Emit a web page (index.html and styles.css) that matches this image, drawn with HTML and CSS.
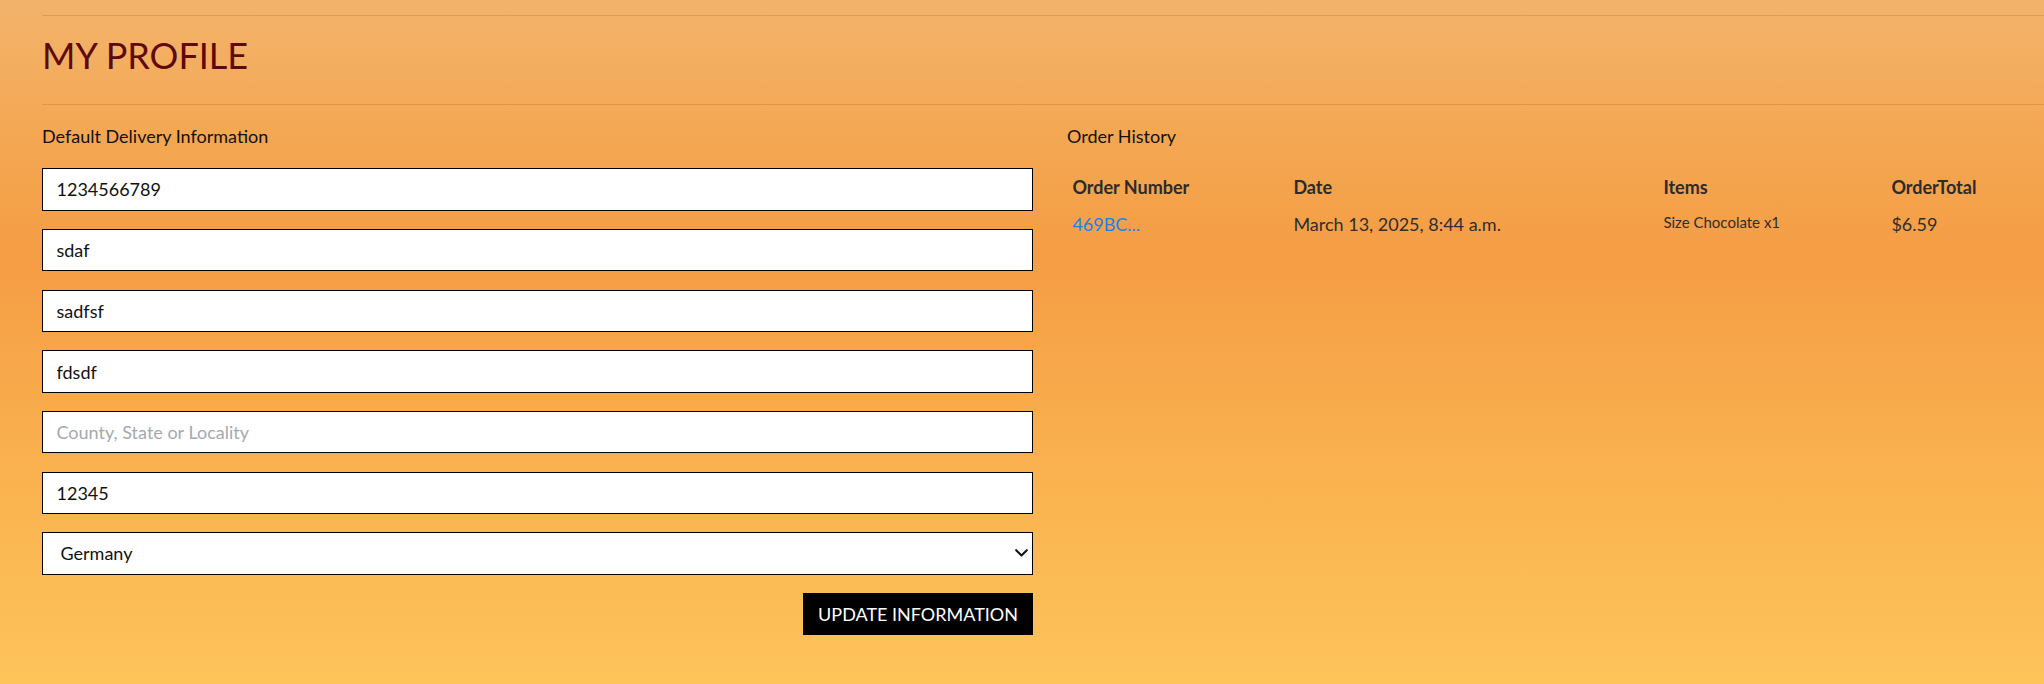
FILE: index.html
```html
<!DOCTYPE html>
<html lang="en">
<head>
<meta charset="utf-8">
<title>My Profile</title>
<link rel="stylesheet" href="styles.css">
</head>
<body>
<main class="profile">
  <hr class="rule">
  <h1 class="title">MY PROFILE</h1>
  <hr class="rule">
  <div class="columns">
    <section class="delivery">
      <p class="section-label">Default Delivery Information</p>
      <form class="delivery-form">
        <input class="field" type="text" value="1234566789">
        <input class="field" type="text" value="sdaf">
        <input class="field" type="text" value="sadfsf">
        <input class="field" type="text" value="fdsdf">
        <input class="field" type="text" placeholder="County, State or Locality">
        <input class="field" type="text" value="12345">
        <div class="select-wrap">
          <select class="field field-select">
            <option>Germany</option>
          </select>
          <svg class="select-arrow" width="13" height="8" viewBox="0 0 13 8" aria-hidden="true">
            <path d="M1.2 1.2 L6.5 6.4 L11.8 1.2" fill="none" stroke="#111" stroke-width="2.1" stroke-linecap="round" stroke-linejoin="round"/>
          </svg>
        </div>
        <div class="actions">
          <button class="btn-update" type="button">UPDATE INFORMATION</button>
        </div>
      </form>
    </section>
    <section class="history">
      <p class="section-label">Order History</p>
      <table class="orders">
        <colgroup>
          <col class="col-number">
          <col class="col-date">
          <col class="col-items">
          <col class="col-total">
        </colgroup>
        <thead>
          <tr>
            <th>Order Number</th>
            <th>Date</th>
            <th>Items</th>
            <th>OrderTotal</th>
          </tr>
        </thead>
        <tbody>
          <tr>
            <td><a class="order-link" href="#">469BC...</a></td>
            <td>March 13, 2025, 8:44 a.m.</td>
            <td class="items-cell">Size Chocolate x1</td>
            <td>$6.59</td>
          </tr>
        </tbody>
      </table>
    </section>
  </div>
</main>
</body>
</html>
```
FILE: styles.css
```css
html {
  min-height: 100%;
  background: linear-gradient(180deg, #f3b36b 0%, #f4a650 22%, #f59d45 38%, #f9ad4c 62%, #fdc45a 100%);
}

body {
  margin: 0;
  min-height: 684px;
  overflow-x: hidden;
  font-family: "Lato", "Open Sans", sans-serif;
  font-size: 18px;
  line-height: 27px;
  color: #111;
}

.profile {
  padding: 15px 0 0 42px;
}

.rule {
  margin: 0;
  height: 0;
  border: 0;
  border-top: 1px solid rgba(120, 60, 0, 0.18);
}

.title {
  margin: 18px 0 27px;
  font-size: 36px;
  line-height: 1.2;
  font-weight: 400;
  color: #5e0a0a;
}

.columns {
  display: grid;
  grid-template-columns: 991px 1fr;
  column-gap: 34px;
  margin-top: 18px;
}

.section-label {
  margin: 0 0 18px;
  font-size: 18px;
  line-height: 27px;
  color: #111;
}

.delivery-form {
  display: flex;
  flex-direction: column;
}

.field {
  display: block;
  width: 100%;
  box-sizing: border-box;
  height: 42.5px;
  margin: 0 0 18.2px;
  padding: 6.75px 13.5px;
  font-family: "Lato", "Open Sans", sans-serif;
  font-size: 18px;
  line-height: 27px;
  color: #111;
  background: #fff;
  border: 1px solid #000;
  border-radius: 0;
  outline: none;
}

.field::placeholder {
  color: #a3a9b0;
  opacity: 1;
}

.select-wrap {
  position: relative;
}

.field-select {
  -webkit-appearance: none;
  appearance: none;
  padding: 0 30px 0 17.5px;
}

.select-arrow {
  position: absolute;
  right: 5px;
  top: 17px;
  pointer-events: none;
}

.actions {
  display: flex;
  justify-content: flex-end;
}

.btn-update {
  height: 42.3px;
  padding: 0 15px;
  font-family: "Lato", "Open Sans", sans-serif;
  font-size: 18px;
  line-height: 27px;
  color: #fff;
  background: #000;
  border: 0;
  border-radius: 0;
  cursor: pointer;
}

.orders {
  width: 100%;
  border-collapse: collapse;
  table-layout: fixed;
}

.col-number { width: 221px; }
.col-date { width: 370px; }
.col-items { width: 228px; }

.orders th,
.orders td {
  padding: 5.4px;
  text-align: left;
  vertical-align: top;
  font-size: 18px;
  line-height: 27px;
  white-space: nowrap;
}

.orders th {
  font-weight: 700;
  color: #2b2b2b;
}

.orders td {
  color: #2e2e2e;
}

.orders .items-cell {
  font-size: 15px;
  line-height: 22.5px;
}

.order-link {
  color: #1582f5;
  text-decoration: none;
}
```
